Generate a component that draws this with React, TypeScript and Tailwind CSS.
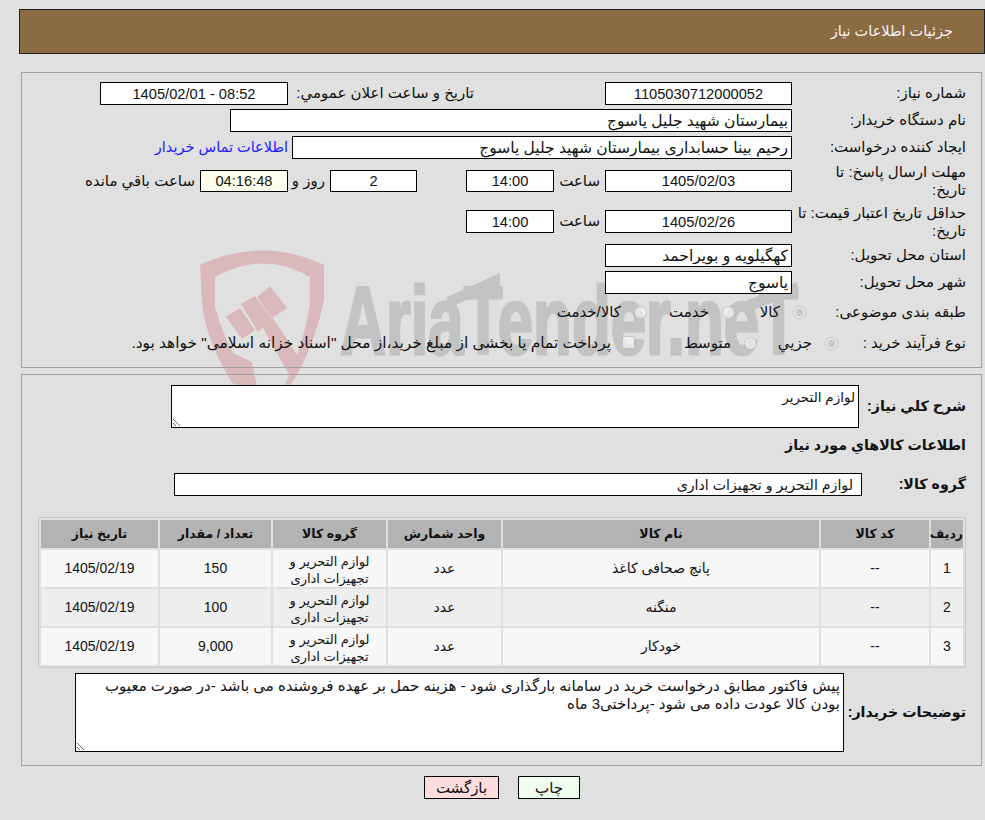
import React from "react";

const box = "h-[23px] shrink-0 border border-black bg-white px-[3px] text-[#111] outline-none";
const field = `${box} text-[15.5px]`;
const num = `${box} text-center text-[14.67px]`;
const numLow = "h-[22px] shrink-0 border border-black px-[3px] text-center text-[14.67px] text-[#111] outline-none";

const items = [
  { id: 1, name: "پانچ صحافی کاغذ", qty: "150" },
  { id: 2, name: "منگنه", qty: "100" },
  { id: 3, name: "خودکار", qty: "9,000" },
];

function Watermark() {
  return (
    <svg className="absolute left-0 top-0 pointer-events-none" width="985" height="820" viewBox="0 0 985 820">
      {/* shield */}
      <path
        fillRule="evenodd"
        fill="#d9b9bb"
        d="M200 265 Q263 236 324 265 L324 300 Q316 340 297 375 L280 400 L232 383 L223 367 Q204 330 202 303 Z M215 277 L215 307 Q222 332 233 353 L252 362 L257 387 L285 385 Q304 345 310 303 L310 277 Q263 250 215 277 Z"
      />
      {/* gavel */}
      <path fill="#d9b9bb" d="M257 297 L270 286 L287 308 L272 318 Z" />
      <path fill="#d9b9bb" d="M241 304 L255 296 L273 320 L258 332 Z" />
      <path fill="#d9b9bb" d="M226 317 L240 308 L255 330 L242 339 Z" />
      <path fill="#d9b9bb" d="M262 326 L273 318 L299 358 L291 378 Z" />
      {/* wordmark */}
      <text
        x="340"
        y="354"
        fontFamily="Liberation Sans"
        fontWeight="700"
        fontSize="96"
        fill="#c3c3c3"
        stroke="#c3c3c3"
        strokeWidth="3"
        textLength="458"
        lengthAdjust="spacingAndGlyphs"
        direction="ltr"
      >
        AriaTender.neT
      </text>
      <path fill="#c3c3c3" d="M447 297 L500 273 L500 285 L447 309 Z" />
      <path fill="#c3c3c3" d="M747 300 L797 282 L797 294 L747 312 Z" />
    </svg>
  );
}

function Radio({ checked, label, className }: { checked?: boolean; label: string; className: string }) {
  return (
    <div className={`flex shrink-0 items-center ${className}`}>
      <input type="radio" disabled defaultChecked={checked} className="shrink-0" />
      <span className="mr-[13px] whitespace-nowrap">{label}</span>
    </div>
  );
}

export default function App() {
  return (
    <div
      dir="rtl"
      className="relative min-h-[820px] w-[985px] overflow-hidden bg-[#e0e0e0] pt-[9px] font-['Liberation_Sans','DejaVu_Sans',sans-serif] text-[15px] text-[#111]"
    >
      <Watermark />
      <div className="relative">
        <div className="ml-[19px] flex h-[45px] items-center border border-[#222] bg-[#8b6b42] pr-[31px] text-[14.5px] text-[#f4f4f4]">
          جزئیات اطلاعات نیاز
        </div>

        {/* need details */}
        <div className="ml-[21px] mr-[3px] mt-[18px] h-[296px] border border-[#a0a0a0] pr-[15px] pt-[9px]">
          <div className="flex h-[23px] items-center">
            <div className="w-[174px] shrink-0">شماره نیاز:</div>
            <input readOnly value="1105030712000052" className={`${num} w-[187px]`} />
            <div className="mr-[131px] w-[186px] shrink-0 whitespace-nowrap">تاریخ و ساعت اعلان عمومي:</div>
            <input readOnly dir="ltr" value="1405/02/01 - 08:52" className={`${num} w-[188px]`} />
          </div>
          <div className="mt-[4px] flex h-[23px] items-center">
            <div className="w-[174px] shrink-0">نام دستگاه خریدار:</div>
            <input readOnly value="بیمارستان شهید جلیل یاسوج" className={`${field} w-[562px]`} />
          </div>
          <div className="mt-[4px] flex h-[23px] items-center">
            <div className="w-[174px] shrink-0">ایجاد کننده درخواست:</div>
            <input readOnly value="رحیم بینا حسابداری بیمارستان شهید جلیل یاسوج" className={`${field} w-[500px]`} />
            <a className="mr-[4px] whitespace-nowrap text-[14.5px] text-[#2020ff]">اطلاعات تماس خریدار</a>
          </div>
          <div className="mt-[5px] flex h-[34px] items-center">
            <div className="w-[174px] shrink-0 pl-[6px] leading-[18px]">مهلت ارسال پاسخ: تا تاریخ:</div>
            <input readOnly value="1405/02/03" className={`${numLow} w-[187px] bg-white`} />
            <div className="mr-[5px] w-[46px] shrink-0">ساعت</div>
            <input readOnly value="14:00" className={`${numLow} w-[88px] bg-white`} />
            <input readOnly value="2" className={`${numLow} mr-[49px] w-[87px] bg-white`} />
            <div className="mr-[5px] w-[37px] shrink-0">روز و</div>
            <input readOnly value="04:16:48" className={`${numLow} w-[88px] bg-[#ffffee]`} />
            <div className="mr-[5px] whitespace-nowrap">ساعت باقي مانده</div>
          </div>
          <div className="mt-[6px] flex h-[35px] items-center">
            <div className="w-[174px] shrink-0 leading-[18px]">حداقل تاریخ اعتبار قیمت: تا تاریخ:</div>
            <input readOnly value="1405/02/26" className={`${num} w-[187px]`} />
            <div className="mr-[5px] w-[46px] shrink-0">ساعت</div>
            <input readOnly value="14:00" className={`${num} w-[88px]`} />
          </div>
          <div className="mt-[5px] flex h-[23px] items-center">
            <div className="w-[174px] shrink-0">استان محل تحویل:</div>
            <input readOnly value="کهگیلویه و بویراحمد" className={`${field} w-[187px]`} />
          </div>
          <div className="mt-[4px] flex h-[23px] items-center">
            <div className="w-[174px] shrink-0">شهر محل تحویل:</div>
            <input readOnly value="یاسوج" className={`${field} w-[187px]`} />
          </div>
          <div className="mt-[6px] flex h-[25px] items-center">
            <div className="w-[160px] shrink-0 whitespace-nowrap">طبقه بندی موضوعی:</div>
            <Radio checked label="کالا" className="w-[71px]" />
            <Radio label="خدمت" className="w-[88px]" />
            <Radio label="کالا/خدمت" className="w-[100px]" />
          </div>
          <div className="mt-[5px] flex h-[26px] items-center">
            <div className="w-[128px] shrink-0 whitespace-nowrap">نوع فرآیند خرید :</div>
            <Radio checked label="جزیي" className="w-[81px]" />
            <Radio label="متوسط" className="w-[122px]" />
            <div className="flex items-center">
              <input type="checkbox" disabled className="shrink-0" />
              <span className="mr-[11px] whitespace-nowrap text-[15.4px]">
                پرداخت تمام یا بخشی از مبلغ خرید،از محل "اسناد خزانه اسلامی" خواهد بود.
              </span>
            </div>
          </div>
        </div>

        {/* goods */}
        <div className="ml-[21px] mr-[3px] mt-[6px] h-[392px] border border-[#a0a0a0] pr-[15px] pt-[10px] text-[14.25px] font-bold">
          <div className="flex items-center">
            <div className="w-[107px] shrink-0">شرح کلي نیاز:</div>
            <textarea
              readOnly
              value="لوازم التحریر"
              className="h-[43px] w-[688px] shrink-0 border border-black bg-white px-[3px] pt-[2px] text-[13.5px] font-normal text-[#111] outline-none"
            />
          </div>
          <div className="mt-[7px] h-[20px] leading-[20px]">اطلاعات کالاهاي مورد نیاز</div>
          <div className="mt-[18px] flex h-[23px] items-center">
            <div className="w-[104px] shrink-0">گروه کالا:</div>
            <input
              readOnly
              value="لوازم التحریر و تجهیزات اداری"
              className="h-[23px] w-[688px] shrink-0 border border-black bg-white pl-[3px] pr-[8px] text-[14.2px] font-normal text-[#111] outline-none"
            />
          </div>

          <table className="mt-[21px] w-[928px] table-fixed border-separate border-spacing-[2px] border border-[#c8c8c8] text-center text-[13px] font-normal">
            <colgroup>
              <col className="w-[32px]" />
              <col className="w-[108px]" />
              <col className="w-[316px]" />
              <col className="w-[113px]" />
              <col className="w-[113px]" />
              <col className="w-[111px]" />
              <col className="w-[117px]" />
            </colgroup>
            <thead>
              <tr className="h-[28px] bg-[#b3b3b3] text-[12.5px] font-bold">
                <th>ردیف</th>
                <th>کد کالا</th>
                <th>نام کالا</th>
                <th>واحد شمارش</th>
                <th>گروه کالا</th>
                <th>تعداد / مقدار</th>
                <th>تاریخ نیاز</th>
              </tr>
            </thead>
            <tbody>
              {items.map((item) => (
                <tr key={item.id} className={`h-[37px] ${item.id === 2 ? "bg-[#eeeeee]" : "bg-[#f7f7f7]"}`}>
                  <td className="text-[14px]">{item.id}</td>
                  <td className="text-[14px]">--</td>
                  <td className="text-[14px]">{item.name}</td>
                  <td className="text-[14px]">عدد</td>
                  <td className="pt-[2px] leading-[17px]">لوازم التحریر و تجهیزات اداری</td>
                  <td className="text-[14px]">{item.qty}</td>
                  <td className="text-[14px]">1405/02/19</td>
                </tr>
              ))}
            </tbody>
          </table>

          <div className="mt-[5px] flex items-center">
            <div className="w-[122px] shrink-0">توضیحات خریدار:</div>
            <textarea
              readOnly
              value="پیش فاکتور مطابق درخواست خرید در سامانه بارگذاری شود - هزینه حمل بر عهده فروشنده می باشد -در صورت معیوب بودن کالا عودت داده می شود -پرداختی3 ماه"
              className="h-[79px] w-[769px] shrink-0 border border-black bg-white px-[3px] pt-[3px] text-[15px] font-normal leading-[18px] text-[#111] outline-none"
            />
          </div>
        </div>

        <div className="mt-[10px] flex justify-center gap-[19px] pl-[19px]">
          <button className="h-[23px] w-[62px] border border-black bg-[#eeffee]">چاپ</button>
          <button className="h-[23px] w-[75px] border border-black bg-[#ffdddd]">بازگشت</button>
        </div>
      </div>
    </div>
  );
}
